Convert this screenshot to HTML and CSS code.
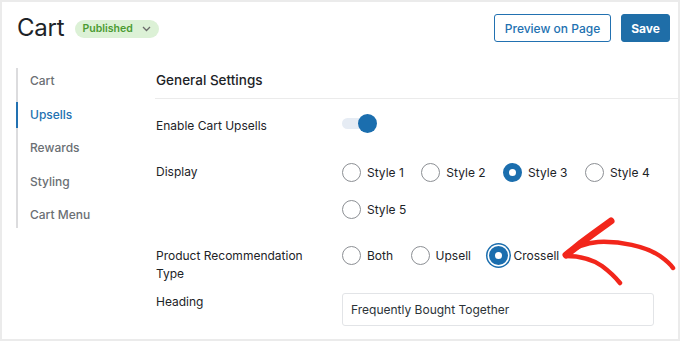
FILE: index.html
```html
<!DOCTYPE html>
<html>
<head>
<meta charset="utf-8">
<link rel="stylesheet" href="styles.css">
</head>
<body>
<div class="frame">
  <header class="header">
    <div class="title-group">
      <h1 class="title">Cart</h1>
      <span class="badge">Published
        <svg class="chev" width="9" height="6" viewBox="0 0 9 6"><path d="M1 1l3.5 3.5L8 1" fill="none" stroke="#6b6b6b" stroke-width="1.3"/></svg>
      </span>
    </div>
    <div class="actions">
      <button class="btn btn-outline">Preview on Page</button>
      <button class="btn btn-primary">Save</button>
    </div>
  </header>
  <div class="body">
    <nav class="sidebar">
      <a class="nav-item">Cart</a>
      <a class="nav-item active">Upsells</a>
      <a class="nav-item">Rewards</a>
      <a class="nav-item">Styling</a>
      <a class="nav-item">Cart Menu</a>
    </nav>
    <main class="main">
      <h2 class="section-title">General Settings</h2>
      <div class="row row-toggle">
        <div class="label">Enable Cart Upsells</div>
        <div class="control">
          <span class="toggle"><span class="track"></span><span class="knob"></span></span>
        </div>
      </div>
      <div class="row row-display">
        <div class="label">Display</div>
        <div class="control radios">
          <span class="opt"><span class="radio"></span>Style 1</span>
          <span class="opt"><span class="radio"></span>Style 2</span>
          <span class="opt"><span class="radio checked"></span>Style 3</span>
          <span class="opt"><span class="radio"></span>Style 4</span>
          <span class="opt"><span class="radio"></span>Style 5</span>
        </div>
      </div>
      <div class="row row-type">
        <div class="label label-wrap">Product Recommendation Type</div>
        <div class="control radios">
          <span class="opt"><span class="radio"></span>Both</span>
          <span class="opt"><span class="radio"></span>Upsell</span>
          <span class="opt"><span class="radio checked focus"></span>Crossell</span>
        </div>
      </div>
      <div class="row row-heading">
        <div class="label">Heading</div>
        <div class="control">
          <div class="input">Frequently Bought Together</div>
        </div>
      </div>
    </main>
  </div>
  <svg class="arrow" width="680" height="341" viewBox="0 0 680 341">
    <g fill="none" stroke="#f2261b" stroke-linecap="round" stroke-linejoin="round">
      <path d="M611 221 C600 229 590 236 581 243 C575 248 570 252 566 255" stroke-width="7"/>
      <path d="M566 255 C574 248 584 243 598 242 C620 241 645 246 660 256 C667 261 671 265 673 268" stroke-width="4.5"/>
      <path d="M566 256 C578 256 592 259 602 266 C610 272 616 278 620 283" stroke-width="4.5"/>
    </g>
  </svg>
</div>
</body>
</html>
```
FILE: styles.css
```css
* { box-sizing: border-box; }
html, body { margin: 0; padding: 0; }
body {
  font-family: Inter, "Liberation Sans", sans-serif;
  color: #1d2327;
  background: #fff;
}
.frame {
  position: relative;
  width: 680px;
  height: 341px;
  border: 2px solid #ebebeb;
  overflow: hidden;
}
.header {
  display: flex;
  justify-content: space-between;
  align-items: center;
  padding: 12px 8px 0 15px;
  height: 40px;
}
.title-group { display: flex; align-items: center; gap: 11px; }
.title {
  margin: 0;
  font-size: 24px;
  font-weight: 400;
  line-height: 28px;
  color: #1d2327;
  letter-spacing: -0.2px;
}
.badge {
  display: inline-flex;
  align-items: center;
  gap: 9px;
  height: 18px;
  padding: 0 8px 0 7px;
  border-radius: 9px;
  background: #dcf1d6;
  color: #4a9b32;
  font-size: 10.5px;
  font-weight: 600;
  margin-top: 1px;
}
.chev { display: block; }
.actions { display: flex; gap: 10px; }
.btn {
  font-family: inherit;
  height: 28px;
  border-radius: 3px;
  font-size: 12px;
  font-weight: 500;
  cursor: pointer;
  padding: 0;
}
.btn-outline {
  width: 117px;
  background: #fff;
  border: 1px solid #2271b1;
  color: #2271b1;
}
.btn-primary {
  width: 49px;
  background: #1f6ea8;
  border: 1px solid #1f6ea8;
  color: #fff;
  font-weight: 700;
}
.body {
  display: grid;
  grid-template-columns: 139px 1fr;
  padding-left: 14px;
  margin-top: 20px;
}
.sidebar {
  margin-top: 6px;
  border-left: 2px solid #dcdcde;
  display: flex;
  flex-direction: column;
  gap: 7.5px;
  align-self: start;
}
.nav-item {
  display: block;
  height: 26px;
  line-height: 26px;
  padding-left: 12px;
  font-size: 12px;
  font-weight: 500;
  color: #6b6f74;
}
.nav-item.active {
  color: #2271b1;
  margin-left: -2px;
  border-left: 2px solid #2271b1;
}
.main { min-width: 0; }
.section-title {
  margin: 0;
  height: 37px;
  line-height: 36px;
  padding-left: 1px;
  font-size: 13.5px;
  font-weight: 500;
  color: #1d2327;
  border-bottom: 1px solid #ebebeb;
}
.row {
  display: grid;
  grid-template-columns: 186px 1fr;
  align-items: start;
  padding-left: 1px;
}
.label {
  font-size: 12px;
  line-height: 18px;
  color: #1d2327;
}
.row-toggle { margin-top: 15px; }
.row-toggle .label { padding-top: 3px; }
.row-display { margin-top: 28px; }
.row-type { margin-top: 28.5px; }
.row-heading { margin-top: 9.5px; }
.label-wrap { line-height: 18.6px; padding-right: 20px; }
.toggle {
  position: relative;
  display: block;
  width: 35px;
  height: 19px;
}
.track {
  position: absolute;
  left: 0; top: 4px;
  width: 32px; height: 11px;
  border-radius: 6px;
  background: #e6ecf4;
}
.knob {
  position: absolute;
  right: 0; top: 0;
  width: 19px; height: 19px;
  border-radius: 50%;
  background: #1b6eae;
}
.radios {
  display: flex;
  flex-wrap: wrap;
  column-gap: 17.5px;
  row-gap: 19px;
}
.opt {
  display: inline-flex;
  align-items: center;
  gap: 6px;
  height: 18px;
  font-size: 12px;
  color: #1d2327;
}
.radio {
  width: 19px;
  height: 19px;
  border-radius: 50%;
  border: 1px solid #8c8f94;
  background: #fff;
  flex: none;
}
.radio.checked {
  border: 6px solid #1b6eae;
}
.radio.focus {
  box-shadow: 0 0 0 1.5px #fff, 0 0 0 3px #1b6eae;
}
.input {
  width: 312px;
  height: 33px;
  border: 1px solid #e2e4e7;
  border-radius: 3px;
  padding-left: 8px;
  line-height: 31px;
  font-size: 12px;
  color: #2c3338;
}
.arrow {
  position: absolute;
  left: -2px;
  top: -2px;
  pointer-events: none;
}
```
